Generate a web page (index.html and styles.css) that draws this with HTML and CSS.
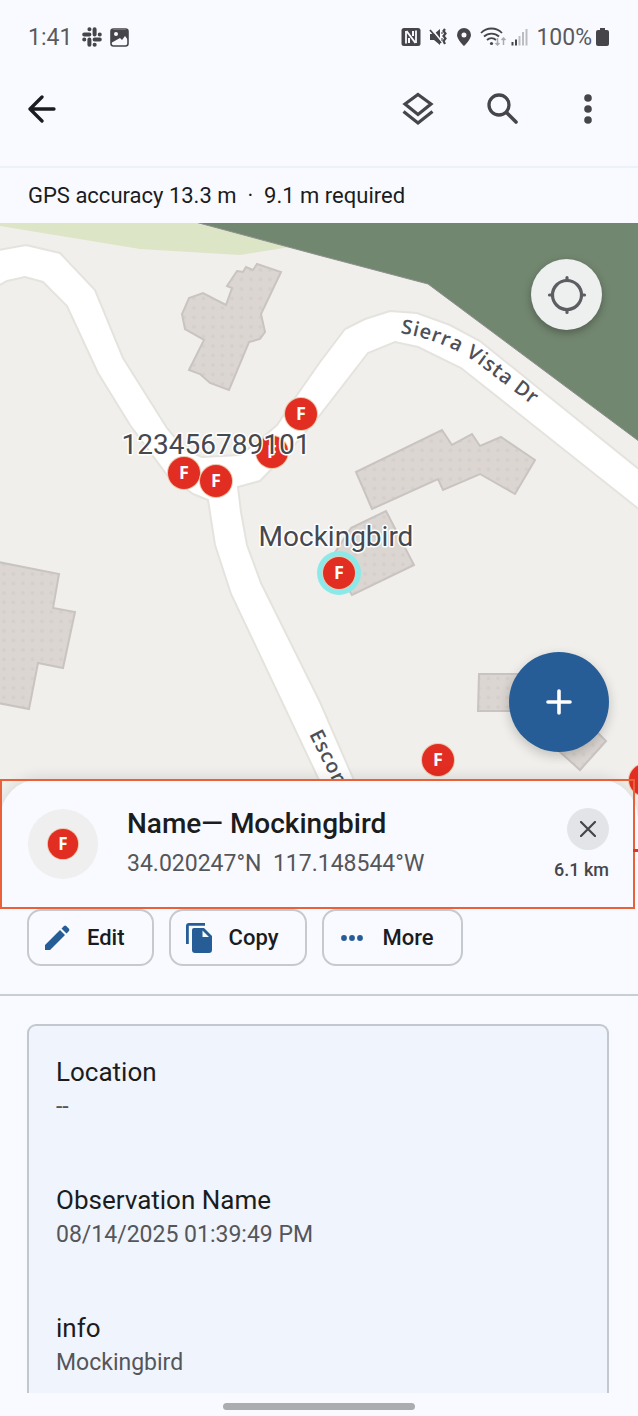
FILE: index.html
```html
<!DOCTYPE html>
<html lang="en">
  <head>
    <meta charset="utf-8">
    <meta name="viewport" content="width=device-width, initial-scale=1">
    <title>Mockingbird</title>
    <link rel="stylesheet" href="styles.css">
  </head>
  <body>
    <div class="status">
      <span>1:41</span>
      <svg class="slack" width="20" height="20" viewBox="0 0 20 20">
        <g stroke="#46464a" stroke-width="4" stroke-linecap="round">
          <path d="M7.4 12.6v5.2M2.2 7.4h5.2M12.6 2.2v5.2M12.6 12.6h5.2"/>
          <path d="M7.4 2.2h.1M2.2 12.6h.1M17.8 7.4h-.1M12.6 17.8h.1"/>
        </g>
      </svg>
      <svg width="19" height="19" viewBox="0 0 19 19">
        <rect x="1" y="1" width="17" height="17" rx="2.5" fill="#f9faff" stroke="#46464a" stroke-width="1.6"/>
        <path d="M1 2h17v10l-3-4-3 4-2-2-9 5z" fill="#46464a"/>
        <circle cx="6" cy="6" r="2" fill="#f9faff"/>
      </svg>
      <div class="status-right">
        <svg width="20" height="20" viewBox="0 0 20 20">
          <rect x="0.5" y="1" width="19" height="18" rx="2.5" fill="#46464a"/>
          <path d="M5 16.500V4M15 16V3.500" stroke="#f9faff" stroke-width="1.800"/>
          <path d="M5.500 4l9 12M8 11v5M12 4v5" stroke="#f9faff" stroke-width="2"/>
        </svg>
        <svg width="19" height="20" viewBox="0 0 19 20">
          <path d="M1 7h4l6-5v16l-6-5H1z" fill="#46464a"/>
          <path d="M2 1l11 14" stroke="#f9faff" stroke-width="1.800"/>
          <path d="M1 3l11 13" stroke="#46464a" stroke-width="1.800"/>
          <path d="M16 2l-1.500 2 2 2.500-2 2.500 2 2.500-2 2.500 1.500 3" fill="none" stroke="#46464a" stroke-width="2.200"/>
          <path d="M13 5v2M13 11v3" stroke="#77777b" stroke-width="1.500"/>
        </svg>
        <svg width="16" height="20" viewBox="0 0 16 20">
          <path d="M8 1a7 7 0 0 0-7 7c0 4.500 7 11 7 11s7-6.500 7-11a7 7 0 0 0-7-7zm0 4.500a2.500 2.500 0 1 1 0 5 2.500 2.500 0 0 1 0-5z" fill="#46464a"/>
        </svg>
        <svg width="27" height="20" viewBox="0 0 27 20">
          <path d="M1 6a14.500 14.500 0 0 1 21 0M4 9.500a11 11 0 0 1 15 0M7 13a6.500 6.500 0 0 1 9 0" fill="none" stroke="#46464a" stroke-width="1.800"/>
          <circle cx="11.500" cy="16.500" r="1.600" fill="#46464a"/>
          <path d="M17.500 11v7M15.500 16l2 2 2-2M23.500 18v-7M21.500 13l2-2 2 2" fill="none" stroke="#a9aaae" stroke-width="1.500"/>
        </svg>
        <svg class="signal" width="17" height="20" viewBox="0 0 17 20">
          <path d="M1.500 15v3.500M5 12.500v6" stroke="#46464a" stroke-width="2"/>
          <path d="M8.500 9v9.500M12 5v13.500M15.500 2v16.500" stroke="#bcbdc1" stroke-width="2"/>
        </svg>
        <span>100%</span>
        <svg class="battery" width="13" height="20" viewBox="0 0 13 20">
          <path d="M4 1h5v2h2q2 0 2 2v12q0 2-2 2H2q-2 0-2-2V5q0-2 2-2h2z" fill="#46464a"/>
        </svg>
      </div>
    </div>

    <header class="appbar">
      <button class="icon-btn" aria-label="Back">
        <svg width="28" height="28" viewBox="0 0 28 28"><path d="M14 2L2 14l12 12M2 14h24" fill="none" stroke="#1a1c20" stroke-width="3.300" stroke-linecap="round" stroke-linejoin="round"/></svg>
      </button>
      <div class="actions">
        <button class="icon-btn" aria-label="Layers">
          <svg width="32" height="36" viewBox="0 0 32 36"><path d="M16 3.500L29 13 16 23.500 3 13zM1.500 20.500L16 32l14.500-11.500" fill="none" stroke="#46464a" stroke-width="3.200"/></svg>
        </button>
        <button class="icon-btn" aria-label="Search">
          <svg width="32" height="32" viewBox="0 0 32 32"><circle cx="12" cy="12" r="10" fill="none" stroke="#46464a" stroke-width="3.300"/><path d="M19.500 19.500l9.500 9.500" stroke="#46464a" stroke-width="3.600" stroke-linecap="round"/></svg>
        </button>
        <button class="icon-btn" aria-label="More options">
          <svg width="32" height="32" viewBox="0 0 32 32" fill="#46464a"><circle cx="16" cy="5" r="3.800"/><circle cx="16" cy="16" r="3.800"/><circle cx="16" cy="27" r="3.800"/></svg>
        </button>
      </div>
    </header>

    <p class="gps">GPS accuracy 13.3 m &nbsp;·&nbsp; 9.1 m required</p>

    <main class="map">
      <svg class="map-canvas" viewBox="0 223 638 597" preserveAspectRatio="xMidYMin slice">
        <defs>
          <pattern id="dots" width="9.500" height="9.500" patternUnits="userSpaceOnUse">
            <rect width="9.500" height="9.500" fill="#dbd6d1"/>
            <circle cx="4" cy="4" r="1.800" fill="#d4cfca"/>
          </pattern>
          <path id="sierra" d="M400 333Q448 341 482 367L560 426"/>
          <path id="escondido" d="M309 734L345 806"/>
          <g id="pin">
            <circle r="17" fill="#e9c9ad"/>
            <circle r="16" fill="#e22d22"/>
            <text class="pin-letter" y="6">F</text>
          </g>
        </defs>

        <path fill="#dde5c7" d="M0 223V226L140 249 240 255 290 247 195 223z"/>
        <path fill="#728770" stroke="#8d8f8c" d="M195 222L318 255 428 284 640 442V222z"/>

        <path class="road" d="M-2 250L26 245 60 253 95 290 123 358 167 428 185 450 202 457 240 455 262 438 277 425 297 395 320 362 345 329 365 319 390 311 417 313 450 325 480 341 640 470V510L461 368 418 347 395 342 368 353 320 415 290 450 260 481 238 487 241 512 247 545 261 583 320 702 353 778 375 825H342L318 778 231 594 215 545 208 500 193 494 167 475 130 425 98 373 67 306 43 282 25 277 7 281-2 286z"/>

        <g class="building">
          <path d="M237 271l6 1 3-5 7 3 4-6 24 8-20 42 4 18-5 7-11 3-20 48-19-7-10-9-11-4 15-30-19-11-3-15 7-16 14-5 23 12 6-17-5-2z"/>
          <path d="M356 472L442 430 452 445 472 434 480 446 501 437 535 460 515 494 480 474 443 490 438 479 372 509z"/>
          <path d="M351 528L386 511 414 565 352 595 330 560z"/>
          <path d="M-2 562L59 574 53 608 75 612 63 668 38 663 29 709-2 703z"/>
          <path d="M479 674h52v37h-53z"/>
          <path d="M606 741L580 770 550 743 580 715z"/>
          <path d="M8 797h12v20H8z"/>
        </g>

        <text class="street"><textPath href="#sierra">Sierra Vista Dr</textPath></text>
        <text class="street"><textPath href="#escondido">Escondido</textPath></text>

        <use href="#pin" x="301" y="414"/>
        <use href="#pin" x="272" y="452"/>
        <use href="#pin" x="184" y="473"/>
        <use href="#pin" x="216" y="481"/>
        <circle cx="339" cy="573" r="22" fill="#8ce9ea"/>
        <use href="#pin" x="339" y="573"/>
        <use href="#pin" x="438" y="760"/>
        <use href="#pin" x="645" y="780"/>

        <text class="place" x="216" y="454">123456789101</text>
        <text class="place" x="336" y="546">Mockingbird</text>
      </svg>

      <button class="locate" aria-label="My location">
        <svg width="40" height="40" viewBox="0 0 40 40" fill="none" stroke="#5d5e62" stroke-width="3.200" stroke-linecap="round"><circle cx="20" cy="20" r="14.500"/><path d="M20 2.500v3M20 34.500v3M2.500 20h3M34.500 20h3"/></svg>
      </button>
      <button class="fab" aria-label="Add">
        <svg width="26" height="26" viewBox="0 0 26 26"><path d="M13 2v22M2 13h22" stroke="#fff" stroke-width="3.600" stroke-linecap="round"/></svg>
      </button>
    </main>

    <section class="sheet">
      <div class="sheet-head">
        <div class="avatar">
          <svg width="34" height="34" viewBox="-18 -18 36 36"><use href="#pin"/></svg>
        </div>
        <div class="title">
          <h1>Name— Mockingbird</h1>
          <p>34.020247°N&nbsp; 117.148544°W</p>
        </div>
        <div class="aside">
          <button class="close" aria-label="Close">
            <svg width="16" height="16" viewBox="0 0 16 16"><path d="M1 1l14 14M15 1L1 15" stroke="#46464a" stroke-width="2.200" stroke-linecap="round"/></svg>
          </button>
          <span>6.1 km</span>
        </div>
      </div>

      <div class="tools">
        <button class="tool">
          <svg width="28" height="28" viewBox="0 0 28 28" fill="#275d97"><path d="M2 21L17 6l5 5L7 26H2zM18.500 4.500L21 2q1.200-.8 2.200 0L26 4.800q.8 1.200 0 2.200L23.500 9.500z"/></svg>
          Edit
        </button>
        <button class="tool">
          <svg width="28" height="30" viewBox="0 0 28 30" fill="#275d97"><path d="M20 0v2.800H3.800V21H1V3q0-3 3-3z"/><path fill-rule="evenodd" d="M9 5h10l8 8v14q0 3-3 3H10q-3 0-3-3V7q0-2 2-2zm8.500 2.500V14H24z"/></svg>
          Copy
        </button>
        <button class="tool">
          <svg width="28" height="28" viewBox="0 0 28 28" fill="#275d97"><circle cx="6" cy="14" r="2.900"/><circle cx="14" cy="14" r="2.900"/><circle cx="22" cy="14" r="2.900"/></svg>
          More
        </button>
      </div>

      <dl class="card">
        <div>
          <dt>Location</dt>
          <dd>--</dd>
        </div>
        <div>
          <dt>Observation Name</dt>
          <dd>08/14/2025 01:39:49 PM</dd>
        </div>
        <div>
          <dt>info</dt>
          <dd>Mockingbird</dd>
        </div>
      </dl>
    </section>

    <div class="navbar"><div class="handle"></div></div>
  </body>
</html>
```
FILE: styles.css
```css
* {
  box-sizing: border-box;
}

body {
  margin: 0;
  min-height: 100vh;
  display: flex;
  flex-direction: column;
  background: #f9faff;
  color: #1a1c20;
  font-family: Roboto, sans-serif;
  overflow-x: hidden;
}

h1, p, dl, dd {
  margin: 0;
}

button {
  padding: 0;
  border: 0;
  background: none;
  color: inherit;
  font: inherit;
  cursor: pointer;
}

svg {
  display: block;
  flex: none;
}

/* status bar */

.status {
  display: flex;
  align-items: center;
  gap: 8px;
  height: 74px;
  padding: 0 29px 0 28px;
  font-size: 23px;
  color: #5a5a5e;
}

.slack {
  margin-left: 2px;
}

.status-right {
  display: flex;
  align-items: center;
  gap: 8px;
  margin-left: auto;
}

.signal,
.battery {
  margin-left: -4px;
}

/* app bar */

.appbar {
  display: flex;
  align-items: center;
  justify-content: space-between;
  padding: 12px 34px 34px 28px;
  height: 94px;
  border-bottom: 2px solid #edf1f8;
}

.actions {
  display: flex;
  align-items: center;
  gap: 53px;
}

.gps {
  padding: 0 28px;
  font-size: 22px;
  line-height: 55px;
}

/* map */

.map {
  position: relative;
  height: 597px;
  background: #f1efeb;
  overflow: hidden;
}

.map-canvas {
  width: 100%;
  height: 100%;
}

.road {
  fill: #fff;
  stroke: #e5e3de;
  stroke-width: 2;
}

.building {
  fill: url(#dots);
  stroke: #c9c4c1;
  stroke-width: 2;
}

.street {
  font: 600 20px "Open Sans", sans-serif;
  letter-spacing: 1px;
  fill: #4d5058;
}

.place {
  font-size: 28px;
  text-anchor: middle;
  fill: #46484f;
  stroke: #fff;
  stroke-width: 3px;
  stroke-linejoin: round;
  paint-order: stroke;
}

.pin-letter {
  font: 700 18px "Open Sans", sans-serif;
  text-anchor: middle;
  fill: #fff;
}

.locate,
.fab {
  position: absolute;
  display: grid;
  place-items: center;
  border-radius: 50%;
}

.locate {
  top: 36px;
  right: 36px;
  width: 71px;
  height: 71px;
  background: #eeefef;
  box-shadow: 0 3px 8px rgba(0, 0, 0, 0.3);
}

.fab {
  right: 29px;
  bottom: 68px;
  width: 100px;
  height: 100px;
  background: #275d97;
  box-shadow: 0 4px 12px rgba(0, 0, 0, 0.2);
}

/* bottom sheet */

.sheet {
  position: relative;
  flex: 1;
  display: flex;
  flex-direction: column;
  margin-top: -41px;
  border-radius: 40px 40px 0 0;
  background: #f9faff;
  box-shadow: 0 -4px 12px rgba(0, 0, 0, 0.08);
}

.sheet-head {
  position: relative;
  display: flex;
  align-items: center;
  gap: 29px;
  height: 130px;
  margin-right: 3px;
  padding: 0 24px 0 26px;
  border: 2px solid #ea6038;
}

.sheet-head::after {
  content: "";
  position: absolute;
  left: 100%;
  top: 68px;
  width: 5px;
  height: 3px;
  background: #d83a26;
}

.avatar {
  display: grid;
  place-items: center;
  width: 70px;
  height: 70px;
  border-radius: 50%;
  background: #eeefee;
}

.title {
  flex: 1;
}

.title h1 {
  font-size: 28px;
  font-weight: 500;
  line-height: 40px;
}

.title p {
  font-size: 23px;
  line-height: 40px;
  color: #55565a;
}

.aside {
  display: flex;
  flex-direction: column;
  align-items: flex-end;
  gap: 8px;
  padding-top: 2px;
  font-size: 18px;
  font-weight: 500;
  line-height: 24px;
  color: #46464a;
}

.close {
  display: grid;
  place-items: center;
  width: 42px;
  height: 42px;
  border-radius: 50%;
  background: #e2e4e8;
}

.tools {
  display: flex;
  gap: 15px;
  padding: 0 28px 28px 27px;
  border-bottom: 2px solid #c9ced3;
}

.tool {
  display: flex;
  align-items: center;
  gap: 16px;
  height: 57px;
  padding: 0 27px 0 14px;
  border: 2px solid #c6cad0;
  border-radius: 14px;
  font-size: 22px;
  font-weight: 500;
}

.card {
  flex: 1;
  display: flex;
  flex-direction: column;
  gap: 58px;
  margin: 28px 29px 0 27px;
  padding: 30px 27px 10px;
  border: 2px solid #c3c8ce;
  border-bottom: 0;
  border-radius: 9px 9px 0 0;
  background: #f0f4fc;
}

.card dt {
  font-size: 26px;
  line-height: 32px;
}

.card dd {
  font-size: 23px;
  line-height: 38px;
  color: #55565a;
}

.navbar {
  position: relative;
  display: flex;
  justify-content: center;
  padding: 10px 0 6px;
  background: #f9faff;
}

.handle {
  width: 30%;
  height: 7px;
  border-radius: 4px;
  background: #abacb0;
}
```
